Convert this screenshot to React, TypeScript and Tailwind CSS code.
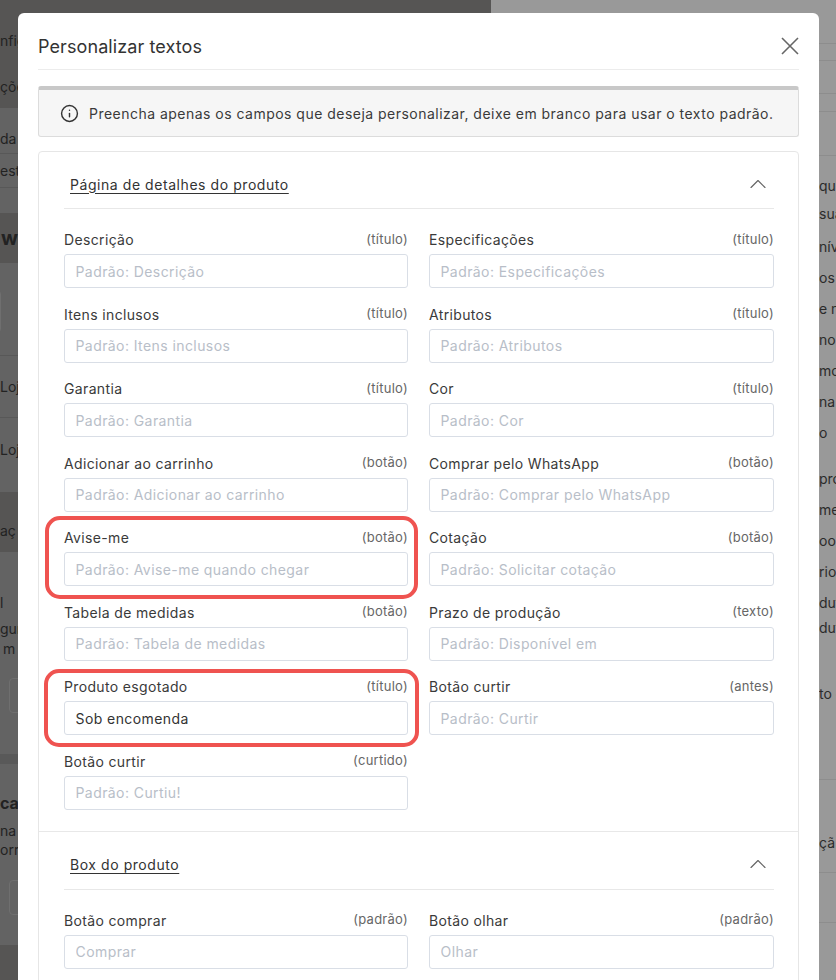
import { Info, ChevronUp } from "lucide-react";

const font = { fontFamily: "Inter, 'Noto Sans', sans-serif" };

type F = { label: string; hint: string; ph?: string; value?: string };

const detalhes: F[] = [
  { label: "Descrição", hint: "(título)", ph: "Padrão: Descrição" },
  { label: "Especificações", hint: "(título)", ph: "Padrão: Especificações" },
  { label: "Itens inclusos", hint: "(título)", ph: "Padrão: Itens inclusos" },
  { label: "Atributos", hint: "(título)", ph: "Padrão: Atributos" },
  { label: "Garantia", hint: "(título)", ph: "Padrão: Garantia" },
  { label: "Cor", hint: "(título)", ph: "Padrão: Cor" },
  { label: "Adicionar ao carrinho", hint: "(botão)", ph: "Padrão: Adicionar ao carrinho" },
  { label: "Comprar pelo WhatsApp", hint: "(botão)", ph: "Padrão: Comprar pelo WhatsApp" },
  { label: "Avise-me", hint: "(botão)", ph: "Padrão: Avise-me quando chegar" },
  { label: "Cotação", hint: "(botão)", ph: "Padrão: Solicitar cotação" },
  { label: "Tabela de medidas", hint: "(botão)", ph: "Padrão: Tabela de medidas" },
  { label: "Prazo de produção", hint: "(texto)", ph: "Padrão: Disponível em" },
  { label: "Produto esgotado", hint: "(título)", value: "Sob encomenda" },
  { label: "Botão curtir", hint: "(antes)", ph: "Padrão: Curtir" },
  { label: "Botão curtir", hint: "(curtido)", ph: "Padrão: Curtiu!" },
];

const box: F[] = [
  { label: "Botão comprar", hint: "(padrão)", ph: "Comprar" },
  { label: "Botão olhar", hint: "(padrão)", ph: "Olhar" },
];

function Field({ f }: { f: F }) {
  return (
    <div className="flex flex-col">
      <div className="mb-[3px] flex h-[21px] items-center justify-between pb-[2px]">
        <span className="text-[14px] tracking-[0.025em] text-[#3a3a3a]">{f.label}</span>
        <span className="text-[13px] tracking-[0.02em] text-[#666]">{f.hint}</span>
      </div>
      <input
        readOnly
        value={f.value ?? ""}
        placeholder={f.ph}
        className="h-[34px] w-full rounded-[3px] border border-[#d9dee6] bg-white px-[10.5px] text-[14px] tracking-[0.03em] text-[#333] outline-none placeholder:text-[#b8bec8]"
      />
    </div>
  );
}

function SectionHead({ title, h }: { title: string; h: string }) {
  return (
    <div className={`flex ${h} items-center justify-between border-b border-[#e8e8e8] pl-[6px] pt-[8px]`}>
      <span className="text-[14px] tracking-[0.04em] text-[#333] underline underline-offset-[3px]">{title}</span>
      <ChevronUp size={28} strokeWidth={1} className="mr-[2px] text-[#666]" />
    </div>
  );
}

type L = { h: number; bg?: string; text?: string; ml?: number; bold?: boolean; line?: boolean; pt?: number; size?: number; boxMl?: number };

function LRow({ h, bg, text, ml, bold, line, pt, size, boxMl }: L) {
  return (
    <div
      className={`flex items-center overflow-hidden whitespace-nowrap text-[#222] ${bold ? "font-bold text-[#111]" : ""} ${line ? "border-b border-[#585858]" : ""}`}
      style={{ height: h, background: bg, paddingLeft: ml ?? 0, paddingTop: pt ?? 0, fontSize: size ?? 14 }}
    >
      {text}
      {boxMl !== undefined && (
        <div className="h-full w-[120px] shrink-0 rounded-[4px] border border-[#6f6f6f]" style={{ marginLeft: boxMl }} />
      )}
    </div>
  );
}

type R = { h: number; mt?: number; text?: string; line?: boolean };

function RRow({ h, mt, text, line }: R) {
  return (
    <div
      className={`flex items-center overflow-hidden whitespace-nowrap pl-[328px] text-[14px] text-[#2b2b2b] ${line ? "border-b border-[#8d8d8d]" : ""}`}
      style={{ height: h, marginTop: mt ?? 0 }}
    >
      {text}
    </div>
  );
}

const D = "#565554";

const leftRows: L[] = [
  { h: 24, bg: D },
  { h: 32, bg: D, text: "nfig", ml: -3 },
  { h: 10, bg: D },
  { h: 40, bg: D, text: "çõe", ml: -4 },
  { h: 2, bg: D },
  { h: 16 },
  { h: 30, text: "da l", line: true, ml: -3 },
  { h: 34, text: "est", line: true, ml: -2 },
  { h: 25 },
  { h: 50, bg: D, text: "w", bold: true, ml: 1, size: 20 },
  { h: 27 },
  { h: 43, boxMl: -119 },
  { h: 23, line: true },
  { h: 62, text: "Loj", line: true },
  { h: 62, text: "Loj" },
  { h: 12 },
  { h: 60, bg: D, text: "aç", ml: -1, pt: 16 },
  { h: 37 },
  { h: 26, text: "l", ml: -2 },
  { h: 26, text: "gur", ml: -2 },
  { h: 14, text: "m", ml: 3 },
  { h: 23 },
  { h: 35, boxMl: 9 },
  { h: 41 },
  { h: 10, bg: "#595959" },
  { h: 27 },
  { h: 24, text: "ca", bold: true, size: 16 },
  { h: 5 },
  { h: 20, text: "na", ml: -2 },
  { h: 18, text: "orr", ml: -1 },
  { h: 22 },
  { h: 35, boxMl: 9 },
  { h: 30 },
  { h: 35, bg: D },
];

const rightRows: R[] = [
  { h: 44, line: true },
  { h: 17, line: true },
  { h: 33, line: true },
  { h: 18, line: true },
  { h: 44, line: true },
  { h: 20, mt: 19, text: "qu" },
  { h: 20, mt: 8, text: "suá" },
  { h: 20, mt: 13, text: "níve" },
  { h: 20, mt: 11, text: "os" },
  { h: 20, mt: 11, text: "e n" },
  { h: 20, mt: 11, text: "nos" },
  { h: 20, mt: 11, text: "mo" },
  { h: 20, mt: 11, text: "na" },
  { h: 20, mt: 11, text: "o" },
  { h: 20, mt: 26, text: "pro" },
  { h: 20, mt: 11, text: "me" },
  { h: 20, mt: 11, text: "oo" },
  { h: 20, mt: 11, text: "rio" },
  { h: 20, mt: 11, text: "dut" },
  { h: 20, mt: 5, text: "dut" },
  { h: 20, mt: 46, text: "to d" },
  { h: 77, line: true },
  { h: 20, mt: 52, text: "çã" },
  { h: 21, line: true },
  { h: 50, line: true },
];

export default function App() {
  return (
    <div className="relative h-[980px] w-[836px] overflow-hidden bg-[#999]" style={font}>
      <div className="flex h-full">
        <div className="w-[491px] shrink-0 overflow-hidden bg-[#636363]">
          {leftRows.map((r, i) => (
            <LRow key={i} {...r} />
          ))}
        </div>
        <div className="w-[345px]">
          {rightRows.map((r, i) => (
            <RRow key={i} {...r} />
          ))}
        </div>
      </div>

      <div className="absolute left-[18px] top-[13px] h-[1000px] w-[801px] rounded-[6px] bg-white px-[20px]">
        <div className="flex h-[57px] items-center justify-between border-b border-[#ececec] pt-[10px]">
          <h2 className="text-[18px] font-normal tracking-[0.005em] text-[#333]">Personalizar textos</h2>
          <svg width="18" height="18" viewBox="0 0 18 18" fill="none" stroke="#666" strokeWidth="1.6">
            <path d="M1 1 L17 17 M17 1 L1 17" />
          </svg>
        </div>

        <div className="mt-[16px] flex h-[51px] items-center gap-[10px] rounded-[3px] border border-[#dcdcdc] border-t-[4px] border-t-[#c8c8c8] bg-[#f6f6f6] pl-[21px]">
          <Info size={19} strokeWidth={1.8} className="text-[#333]" />
          <span className="whitespace-nowrap text-[14px] tracking-[0.034em] text-[#3a3a3a]">
            Preencha apenas os campos que deseja personalizar, deixe em branco para usar o texto padrão.
          </span>
        </div>

        <div className="mt-[14px] rounded-[4px] border border-[#e6e6e6]">
          <div className="border-b border-[#e8e8e8] pb-[21px] pl-[25px] pr-[24px]">
            <SectionHead title="Página de detalhes do produto" h="h-[57px]" />
            <div className="grid grid-cols-[344px_345px] gap-x-[21px] gap-y-[16.5px] pt-[21px]">
              {detalhes.map((f, i) => (
                <Field key={i} f={f} />
              ))}
            </div>
          </div>
          <div className="pb-[21px] pl-[25px] pr-[24px]">
            <SectionHead title="Box do produto" h="h-[58px]" />
            <div className="grid grid-cols-[344px_345px] gap-x-[21px] gap-y-[16.5px] pt-[21px]">
              {box.map((f, i) => (
                <Field key={i} f={f} />
              ))}
            </div>
          </div>
        </div>
      </div>

      <div className="absolute left-[45px] top-[516px] h-[83px] w-[373px] rounded-[15px] border-[4px] border-[#ef5350]" />
      <div className="absolute left-[44px] top-[669px] h-[78px] w-[375px] rounded-[15px] border-[4px] border-[#ef5350]" />
    </div>
  );
}
